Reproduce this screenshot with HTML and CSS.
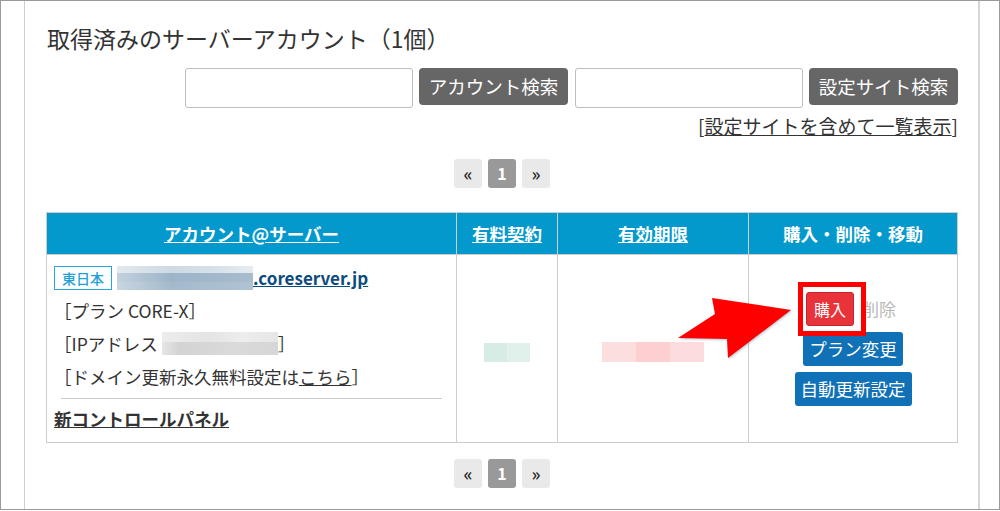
FILE: index.html
```html
<!DOCTYPE html>
<html lang="ja">
<head>
<meta charset="utf-8">
<title>取得済みのサーバーアカウント</title>
<link rel="stylesheet" href="styles.css">
</head>
<body>
<div class="frame">
  <div class="panel">
    <h1 class="title">取得済みのサーバーアカウント（1個）</h1>
    <div class="search-row">
      <input class="search-input" type="text">
      <button class="btn-gray">アカウント検索</button>
      <input class="search-input" type="text">
      <button class="btn-gray">設定サイト検索</button>
    </div>
    <div class="list-row">[<a href="#" class="u-link">設定サイトを含めて一覧表示</a>]</div>
    <div class="pager">
      <span class="pg">«</span>
      <span class="pg pg-active">1</span>
      <span class="pg">»</span>
    </div>
    <table class="acct">
      <colgroup>
        <col class="c1"><col class="c2"><col class="c3"><col class="c4">
      </colgroup>
      <thead>
        <tr>
          <th><a href="#">アカウント@サーバー</a></th>
          <th><a href="#">有料契約</a></th>
          <th><a href="#">有効期限</a></th>
          <th>購入・削除・移動</th>
        </tr>
      </thead>
      <tbody>
        <tr>
          <td class="cell-acct">
            <div class="line line-first">
              <span class="badge">東日本</span>
              <span class="blur-mail"><i class="bm1"></i><i class="bm2"></i><i class="bm3"></i></span><a href="#" class="domain">.coreserver.jp</a>
            </div>
            <div class="line">［プラン CORE-X］</div>
            <div class="line">［IPアドレス <span class="blur-ip"><i class="bi1"></i><i class="bi2"></i></span>］</div>
            <div class="line">［ドメイン更新永久無料設定は<a href="#" class="u-link">こちら</a>］</div>
            <div class="sep"></div>
            <div class="cp-line"><a href="#" class="cp-link">新コントロールパネル</a></div>
          </td>
          <td class="cell-mid"><span class="blur-green"><i></i><i></i></span></td>
          <td class="cell-mid"><span class="blur-pink"><i></i><i></i><i></i></span></td>
          <td class="cell-mid">
            <div class="actions">
              <div class="act-row">
                <span class="buy-wrap"><button class="btn-red">購入</button><span class="highlight"></span></span>
                <span class="del">削除</span>
              </div>
              <button class="btn-blue">プラン変更</button>
              <button class="btn-blue">自動更新設定</button>
            </div>
          </td>
        </tr>
      </tbody>
    </table>
    <div class="pager pager-bottom">
      <span class="pg">«</span>
      <span class="pg pg-active">1</span>
      <span class="pg">»</span>
    </div>
  </div>
  <svg class="arrow" width="130" height="80" viewBox="670 290 130 80">
    <polygon points="677,337 714,313 711,297 790,309 727,357 726,338" fill="#ff0000"/>
  </svg>
</div>
</body>
</html>
```

FILE: styles.css
```css
* { box-sizing: border-box; }
html, body { margin: 0; padding: 0; background: #fff; }
body {
  font-family: "Noto Sans CJK JP", "Noto Sans", sans-serif;
  color: #333;
}
.frame {
  position: relative;
  width: 1000px;
  height: 510px;
  border: 1px solid #9a9a9a;
  padding: 0 19px 0 23px;
  overflow: hidden;
}
.panel {
  height: 100%;
  border-left: 1px solid #cfcfcf;
  border-right: 2px solid #d6d6d6;
  padding: 22px 20px 0 21px;
}
.title {
  margin: 0 0 0 1px;
  font-size: 23px;
  line-height: 30px;
  font-weight: normal;
  color: #333;
}
.search-row {
  margin-top: 15px;
  display: flex;
  justify-content: flex-end;
  align-items: flex-start;
  gap: 6px;
}
.search-input {
  width: 228px;
  height: 40px;
  border: 1px solid #bdbdbd;
  border-radius: 3px;
  margin: 0;
  padding: 0 6px;
  font-size: 16px;
}
.search-input + .btn-gray + .search-input { margin-left: 1px; }
.btn-gray {
  width: 149px;
  height: 37px;
  border: none;
  border-radius: 4px;
  background: #666;
  color: #fff;
  font-family: inherit;
  font-size: 18.5px;
  line-height: 37px;
  padding: 0;
  margin: 0;
}
.list-row {
  margin-top: 7px;
  text-align: right;
  font-size: 19px;
  line-height: 22px;
  color: #333;
}
.u-link { color: #333; text-decoration: underline; }
.pager {
  margin-top: 22px;
  display: flex;
  justify-content: center;
  gap: 6px;
}
.pager-bottom { margin-top: 16px; }
.pg {
  width: 28px;
  height: 29px;
  border-radius: 3px;
  background: #e9e9e9;
  color: #222;
  font-size: 18px;
  font-weight: 500;
  line-height: 28px;
  text-align: center;
}
.pg-active {
  background: #999;
  color: #fff;
  font-weight: bold;
  font-size: 16px;
  line-height: 29px;
}
.acct {
  margin-top: 24px;
  width: 911px;
  border-collapse: collapse;
  table-layout: fixed;
  border: 1px solid #cccccc;
}
.c1 { width: 410px; }
.c2 { width: 101px; }
.c3 { width: 191px; }
.c4 { width: 209px; }
.acct th {
  height: 42px;
  background: #0399cd;
  color: #fff;
  font-size: 17.5px;
  font-weight: bold;
  border: 1px solid #cccccc;
  padding: 0;
  text-align: center;
}
.acct th a { color: #fff; text-decoration: underline; }
.acct td {
  border: 1px solid #cccccc;
  vertical-align: middle;
  padding: 0;
}
.cell-acct {
  padding: 6px 7px 8px 7px !important;
  vertical-align: top !important;
}
.line {
  height: 33px;
  line-height: 33px;
  font-size: 17.5px;
  white-space: nowrap;
  display: flex;
  align-items: center;
}
.badge {
  display: inline-block;
  height: 24px;
  line-height: 22px;
  border: 1px solid #25a5dc;
  color: #1f9fd8;
  font-size: 14px;
  font-weight: 500;
  padding: 0 7px;
  margin-right: 5px;
}
.blur-mail {
  display: inline-flex;
  flex-direction: column;
  width: 136px;
  height: 24px;
}
.blur-mail i { display: block; }
.bm1 { height: 7px; background: linear-gradient(90deg, #e3e9ef 0%, #cdd9e3 40%, #d6e0e8 70%, #e6ecf1 100%); }
.bm2 { height: 9px; background: linear-gradient(90deg, #c3d1dd 0%, #9db5c9 40%, #a7bccd 100%); }
.bm3 { height: 8px; background: linear-gradient(90deg, #c9d6e1 0%, #a4bacc 40%, #aec2d2 100%); }
.domain {
  color: #0d4b7f;
  font-weight: bold;
  text-decoration: underline;
  font-size: 17px;
}
.blur-ip {
  display: inline-flex;
  flex-direction: column;
  width: 116px;
  height: 23px;
  margin-left: 4px;
}
.blur-ip i { display: block; }
.bi1 { height: 10px; background: linear-gradient(90deg, #ececec, #e4e4e4 40%, #ededed 70%, #e6e6e6); }
.bi2 { height: 13px; background: linear-gradient(90deg, #e6e6e6, #d3d3d3 15%, #dadada 60%, #d6d6d6); }
.sep {
  margin: 5px 7px 0 7px;
  border-top: 1px solid #cccccc;
}
.cp-line {
  height: 30px;
  line-height: 30px;
  margin-top: 5px;
  font-size: 17.5px;
}
.cp-link { color: #333; font-weight: bold; text-decoration: underline; }
.cell-mid { text-align: center; }
.blur-green {
  display: inline-flex;
  width: 46px;
  height: 19px;
  vertical-align: middle;
  margin-top: 6px;
}
.blur-green i { flex: 1; background: #d6ece4; }
.blur-green i + i { background: #e0f1eb; }
.blur-pink {
  display: inline-flex;
  width: 103px;
  height: 20px;
  vertical-align: middle;
  margin-top: 6px;
}
.blur-pink i { flex: 1; background: #fddede; }
.blur-pink i:nth-child(2) { background: #fccfd0; }
.blur-pink i:nth-child(3) { background: #fddcdd; }
.actions {
  display: flex;
  flex-direction: column;
  align-items: center;
  gap: 6px;
}
.act-row {
  display: flex;
  align-items: center;
  margin-left: -4px;
}
.buy-wrap { position: relative; display: inline-block; }
.btn-red {
  width: 48px;
  height: 34px;
  border: 1px solid #c9232b;
  border-radius: 3px;
  background: #e9333b;
  color: #fff;
  font-family: inherit;
  font-size: 16px;
  padding: 0;
  display: block;
}
.highlight {
  position: absolute;
  left: -8px;
  top: -10px;
  width: 68px;
  height: 54px;
  border: 5px solid #ff0000;
}
.del {
  margin-left: 8px;
  color: #b8b8b8;
  font-size: 17px;
}
.btn-blue {
  height: 34px;
  border: none;
  border-radius: 3px;
  background: #1171b6;
  color: #fff;
  font-family: inherit;
  font-size: 17.5px;
  padding: 0 6px;
  line-height: 34px;
}
.arrow {
  position: absolute;
  left: 670px;
  top: 290px;
  filter: drop-shadow(1px 1px 1px rgba(40, 90, 120, 0.35));
}
```
